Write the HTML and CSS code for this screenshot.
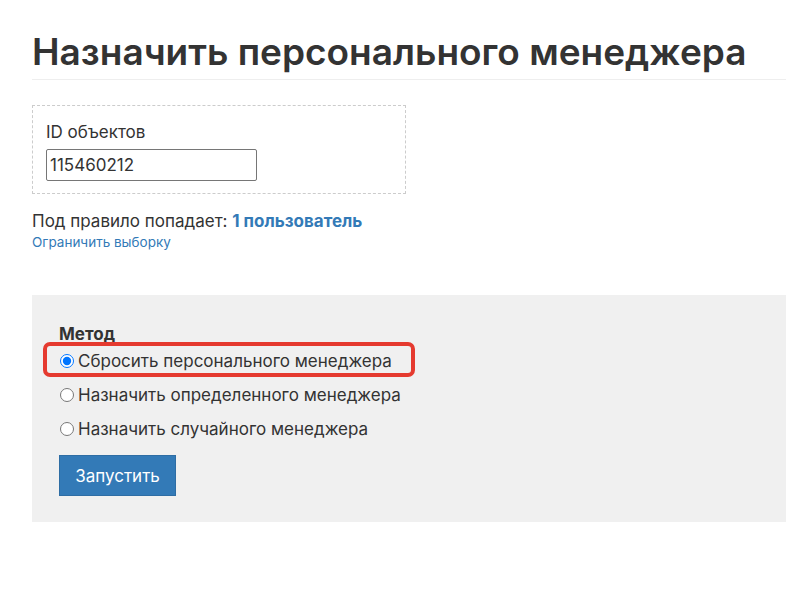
FILE: index.html
```html
<!DOCTYPE html>
<html lang="ru">
<head>
<meta charset="utf-8">
<link rel="stylesheet" href="styles.css">
</head>
<body>
<div class="page">
  <h1 class="title">Назначить персонального менеджера</h1>
  <div class="filter-box">
    <label class="field-label" for="ids">ID объектов</label>
    <input class="field-input" id="ids" type="text" value="115460212">
  </div>
  <div class="summary">Под правило попадает: <a class="count-link" href="#">1 пользователь</a></div>
  <a class="limit-link" href="#">Ограничить выборку</a>
  <div class="method-panel">
    <div class="method-title">Метод</div>
    <div class="radio-group">
      <label class="radio-row highlighted"><input type="radio" name="m" checked><span>Сбросить персонального менеджера</span></label>
      <label class="radio-row"><input type="radio" name="m"><span>Назначить определенного менеджера</span></label>
      <label class="radio-row"><input type="radio" name="m"><span>Назначить случайного менеджера</span></label>
    </div>
    <button class="run-btn" type="button">Запустить</button>
  </div>
</div>
</body>
</html>
```
FILE: styles.css
```css
html, body {
  margin: 0;
  padding: 0;
  background: #fff;
}
body {
  font-family: Inter, "Noto Sans", sans-serif;
  color: #333;
  font-size: 17px;
}
.page {
  padding-left: 32px;
}
.title {
  margin: 29px 0 0;
  font-size: 37px;
  font-weight: 600;
  line-height: 46px;
  padding-bottom: 4px;
  border-bottom: 1px solid #eee;
  color: #333;
  white-space: nowrap;
}
.filter-box {
  margin-top: 25px;
  width: 346px;
  height: 61px;
  border: 1px dashed #ccc;
  padding: 15px 13px 11px;
  display: flex;
  flex-direction: column;
}
.field-label {
  font-size: 17px;
  line-height: 22px;
  margin-bottom: 6px;
}
.field-input {
  width: 211px;
  height: 32px;
  box-sizing: border-box;
  border: 1px solid #767676;
  border-radius: 2px;
  padding: 0 3px;
  font: inherit;
  font-size: 17px;
  color: #333;
}
.summary {
  margin-top: 16px;
  line-height: 22px;
}
.count-link {
  color: #337ab7;
  font-weight: 700;
  text-decoration: none;
}
.limit-link {
  display: block;
  font-size: 13.5px;
  line-height: 18px;
  margin-top: 1px;
  color: #337ab7;
  text-decoration: none;
}
.method-panel {
  margin-top: 44px;
  background: #f0f0f0;
  padding: 29px 27px 26px;
}
.method-title {
  font-weight: 700;
  line-height: 20px;
}
.radio-group {
  display: flex;
  flex-direction: column;
}
.radio-row {
  display: flex;
  align-items: center;
  height: 34px;
  line-height: 22px;
}
.radio-row input {
  margin: 0 4px 0 1px;
  width: 14px;
  height: 14px;
}
.highlighted {
  position: relative;
}
.highlighted::before {
  content: "";
  position: absolute;
  left: -16px;
  top: -2px;
  width: 372px;
  height: 35px;
  border: 4px solid #e53a2f;
  border-radius: 7px;
  box-sizing: border-box;
}
.run-btn {
  margin-top: 9px;
  width: 117px;
  height: 41px;
  background: #337ab7;
  border: 1px solid #2e6da4;
  color: #fff;
  font: inherit;
  font-size: 17px;
  padding: 0;
}
```
